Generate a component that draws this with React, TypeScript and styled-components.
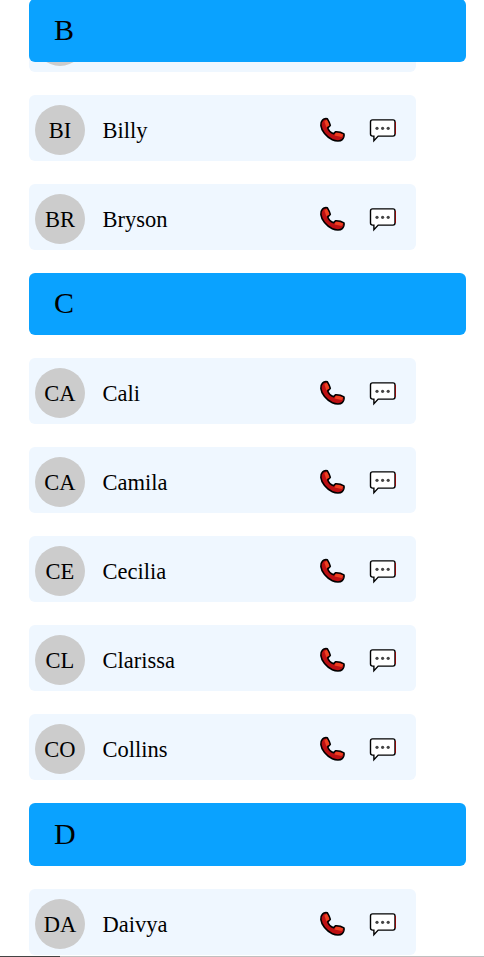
import React from "react";
import styled, { createGlobalStyle } from "styled-components";

const GlobalStyle = createGlobalStyle`
  * { box-sizing: border-box; }
  body {
    margin: 0;
    background: #fff;
    color: #000;
    font-family: "Liberation Serif", "Times New Roman", serif;
  }
`;

const Page = styled.main`
  display: flex;
  flex-direction: column;
  height: 957px;
  overflow: hidden;
`;

const Directory = styled.div`
  display: flex;
  flex: 1;
  min-height: 0;
  flex-direction: column;
  gap: 23px;
  padding: 0 18px 0 29px;
  overflow: hidden;
`;

const Group = styled.section`
  display: flex;
  flex: none;
  flex-direction: column;
  gap: 23px;
`;

const GroupHeader = styled.h2<{ $stuck?: boolean }>`
  position: relative;
  z-index: 1;
  display: flex;
  flex: none;
  align-items: center;
  height: ${(p) => (p.$stuck ? 63 : 62.4)}px;
  margin: ${(p) => (p.$stuck ? "-1px 0 -79px" : "0")};
  padding: 0 25px ${(p) => (p.$stuck ? 1 : 1.8)}px;
  border-radius: 6px;
  background: #0aa2ff;
  font-size: 30px;
  font-weight: 400;
`;

const ContactRow = styled.article`
  display: flex;
  flex: none;
  align-items: center;
  width: 387px;
  height: 66px;
  padding: 4px 19px 0 6px;
  border-radius: 6px;
  background: #eff7ff;
  font-size: 22.5px;
`;

const Avatar = styled.div`
  display: flex;
  flex: none;
  align-items: center;
  justify-content: center;
  width: 50px;
  height: 50px;
  padding-top: 2px;
  border-radius: 50%;
  background: #ccc;
`;

const Name = styled.span`
  flex: 1;
  margin-left: 17.5px;
  padding-top: 2px;
`;

const Actions = styled.div`
  display: flex;
  gap: 22px;
`;

const Icon = styled.svg`
  display: block;
  width: 28px;
  height: 28px;
`;

const Track = styled.div`
  flex: none;
  height: 1px;
  background: #c0c0c0;
`;

const Progress = styled.div`
  width: 60px;
  height: 1px;
  background: #444;
`;

const handset =
  "M3.5 4.1C4.7 2.8 7 2.5 8.4 2.8C9.5 4.6 11 7.4 11.3 9.4C11 10.5 9.4 11.2 8.7 11.8C9.4 14.2 12.2 17 14.6 17.8C15.1 17.2 15.7 16.3 16.7 15.8C19.2 15.7 22.9 16.6 24.9 17.9C25.5 19.4 24.7 22.2 23.2 23.6C21.4 25.4 16.9 25.3 13.3 23.7C7.3 20.9 2.4 14.6 1.9 9.7C1.7 7.4 2.2 5.4 3.5 4.1Z";

function PhoneIcon() {
  return (
    <Icon viewBox="0 0 28 28">
      <path d={handset} fill="#bd1013" />
      <path d="M5.4 5.6L8.2 3.2L11 9.2L7.4 11.4Z" fill="#ee4020" />
      <path d="M16.8 16.3L24.6 18.3L22.6 21L15.6 19.4Z" fill="#ee4020" />
      <path
        d={handset}
        fill="none"
        stroke="#000"
        strokeWidth="1.6"
        strokeLinejoin="round"
      />
    </Icon>
  );
}

function MessageIcon() {
  return (
    <Icon viewBox="0 0 28 28">
      <path
        d="M3.6 3.9H24Q26 3.9 26 5.9V18.1Q26 20.1 24 20.1H9.2L4.9 24.8V20.1H3.6Q1.5 20.1 1.5 18.1V5.9Q1.5 3.9 3.6 3.9Z"
        fill="#fff"
        stroke="#000"
        strokeWidth="1.4"
      />
      <path d="M26.5 5.9V18.1" stroke="#920000" strokeWidth=".9" />
      <g fill="#444">
        <circle cx="8" cy="12.3" r="1.6" />
        <circle cx="13.6" cy="12.3" r="1.6" />
        <circle cx="19.2" cy="12.3" r="1.6" />
      </g>
    </Icon>
  );
}

const groups = [
  { letter: "B", stuck: true, names: ["", "Billy", "Bryson"] },
  { letter: "C", names: ["Cali", "Camila", "Cecilia", "Clarissa", "Collins"] },
  { letter: "D", names: ["Daivya"] },
];

function Contact({ name }: { name: string }) {
  return (
    <ContactRow>
      <Avatar>{name.slice(0, 2).toUpperCase()}</Avatar>
      <Name>{name}</Name>
      {name && (
        <Actions>
          <PhoneIcon />
          <MessageIcon />
        </Actions>
      )}
    </ContactRow>
  );
}

export default function App() {
  return (
    <>
      <GlobalStyle />
      <Page>
        <Directory>
          {groups.map(({ letter, stuck, names }) => (
            <Group key={letter}>
              <GroupHeader $stuck={stuck}>{letter}</GroupHeader>
              {names.map((name) => (
                <Contact key={name} name={name} />
              ))}
            </Group>
          ))}
        </Directory>
        <Track>
          <Progress />
        </Track>
      </Page>
    </>
  );
}
